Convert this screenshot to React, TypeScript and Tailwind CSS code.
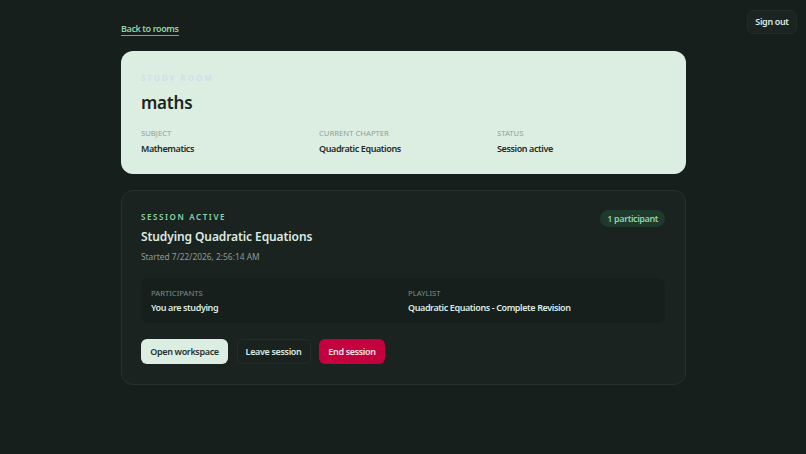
const font = "font-['Noto_Sans','Open_Sans',sans-serif]";

function Field({ label, value, dark }: { label: string; value: string; dark?: boolean }) {
  return (
    <div>
      <div className={`text-[7.7px] leading-[12px] uppercase ${dark ? 'text-[#7f8c86]' : 'text-[#8f9f97]'}`}>
        {label}
      </div>
      <div className={`text-[9px] leading-[14px] font-semibold tracking-[-0.4px] ${dark ? 'mt-[2px] text-[#dcebe2]' : 'mt-[3px] text-[#1f2b26]'}`}>
        {value}
      </div>
    </div>
  );
}

export default function App() {
  return (
    <div className={`${font} relative min-h-[454px] bg-[#161f1c] overflow-hidden`}>
      <button className="absolute top-[10px] right-[9px] w-[50px] h-[24px] rounded-md border border-[#212b27] bg-[#1b2421] text-[9px] font-semibold tracking-[-0.35px] text-[#dcebe2]">
        Sign out
      </button>

      <div className="w-[565px] ml-[121px] pt-[14px]">
        <div className="h-[37px]">
          <a className="inline-block text-[9px] leading-[13px] font-semibold tracking-[-0.4px] text-[#8fd3a8] border-b border-[#6fae88]">Back to rooms</a>
        </div>

        <section className="h-[123px] rounded-xl bg-[#dceee2] px-5 pt-[20px]">
          <div className="text-[8px] leading-[13px] font-semibold uppercase tracking-[2px] text-[#cfdcec]">Study room</div>
          <h1 className="mt-[6px] text-[17px] leading-[26px] font-semibold tracking-[-0.2px] text-[#1a2420]">maths</h1>
          <div className="mt-[11px] grid grid-cols-3 gap-[9px]">
            <Field label="Subject" value="Mathematics" />
            <Field label="Current chapter" value="Quadratic Equations" />
            <Field label="Status" value="Session active" />
          </div>
        </section>

        <section className="mt-4 h-[195px] rounded-xl border border-[#27312d] bg-[#1a2320] pl-[19px] pr-5 pt-[19px]">
          <div className="flex items-start justify-between">
            <div>
              <div className="text-[8px] leading-[13px] font-semibold uppercase tracking-[1.6px] text-[#8fd3a8]">Session active</div>
              <h2 className="mt-[5px] text-[12px] leading-[18px] font-semibold tracking-[-0.1px] text-[#dcebe2]">Studying Quadratic Equations</h2>
              <p className="mt-[4px] text-[8.4px] leading-[13px] text-[#8f9b95]">Started 7/22/2026, 2:56:14 AM</p>
            </div>
            <span className="rounded-full bg-[#1f3a2c] px-[7px] py-[2px] text-[9px] leading-[13px] font-semibold tracking-[-0.4px] text-[#8fd3a8]">1 participant</span>
          </div>

          <div className="mt-[15px] h-[45px] rounded-lg bg-[#161f1c] px-[10px] pt-[9px] grid grid-cols-2 gap-[10px]">
            <Field dark label="Participants" value="You are studying" />
            <Field dark label="Playlist" value="Quadratic Equations - Complete Revision" />
          </div>

          <div className="mt-[16px] flex gap-[8.5px]">
            <button className="h-[25px] w-[87px] rounded-md bg-[#dceee2] text-[9px] font-semibold tracking-[-0.35px] text-[#26332d]">Open workspace</button>
            <button className="h-[25px] w-[74px] rounded-md border border-[#232d29] bg-[#19221f] text-[9px] font-semibold tracking-[-0.35px] text-[#dcebe2]">Leave session</button>
            <button className="h-[25px] w-[66px] rounded-md bg-[#c5003e] text-[9px] font-semibold tracking-[-0.35px] text-[#f5e6ea]">End session</button>
          </div>
        </section>
      </div>
    </div>
  );
}
